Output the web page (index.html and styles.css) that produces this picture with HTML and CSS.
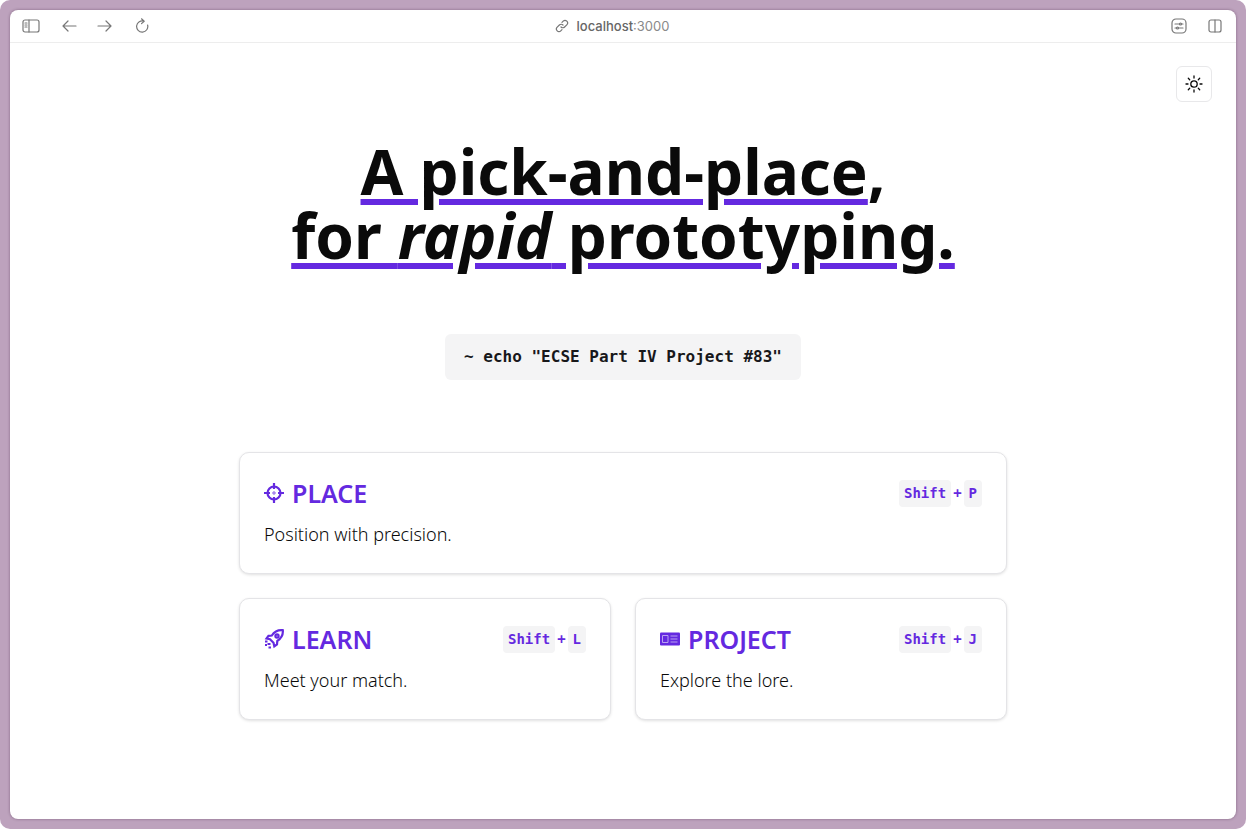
FILE: index.html
```html
<!DOCTYPE html>
<html lang="en">
<head>
    <meta charset="UTF-8">
    <meta name="viewport" content="width=device-width, initial-scale=1.0">
    <title>localhost:3000</title>
    <link rel="stylesheet" href="styles.css">
</head>
<body>
    <div class="frame">
        <div class="window">
            <div class="toolbar">
                <div class="toolbar-group">
                    <svg class="tool-icon" width="18" height="14" viewBox="0 0 18 14"><rect x="1" y="1" width="16" height="12" rx="2"/><path d="M7 1v12M3 4h2M3 6h2M3 8h2"/></svg>
                    <svg class="tool-icon" width="16" height="14" viewBox="0 0 16 14"><path d="M15 7H2M7 2 2 7l5 5"/></svg>
                    <svg class="tool-icon" width="16" height="14" viewBox="0 0 16 14"><path d="M1 7h13M9 2l5 5-5 5"/></svg>
                    <svg class="tool-icon" width="16" height="16" viewBox="0 0 16 16"><path d="M10 3.200A5.600 5.600 0 1 0 13.600 7M7.500 .8 10.200 3.200 7.500 5.600"/></svg>
                </div>
                <div class="address">
                    <svg class="tool-icon" width="14" height="14" viewBox="0 0 14 14"><path d="M6 8a2.500 2.500 0 0 0 3.600 0l2.200-2.200a2.500 2.500 0 0 0-3.600-3.600L7 3.400"/><path d="M8 6a2.500 2.500 0 0 0-3.600 0L2.200 8.200a2.500 2.500 0 0 0 3.600 3.600L7 10.600"/></svg>
                    <span class="host">localhost<span class="port">:3000</span></span>
                </div>
                <div class="toolbar-group right">
                    <svg class="tool-icon" width="16" height="16" viewBox="0 0 16 16"><rect x="1" y="1" width="14" height="14" rx="4"/><path d="M4 6h4.500M10.500 6H12M4 10h1.500M7.500 10H12"/><circle cx="9.500" cy="6" r="1"/><circle cx="6.500" cy="10" r="1"/></svg>
                    <svg class="tool-icon" width="14" height="14" viewBox="0 0 14 14"><rect x="1" y="1" width="12" height="12" rx="2"/><path d="M7 1v12"/></svg>
                </div>
            </div>

            <main class="page">
                <div class="top-bar">
                    <button class="theme-button" type="button" aria-label="Toggle theme">
                        <svg width="18" height="18" viewBox="0 0 18 18"><circle cx="9" cy="9" r="3.200"/><path d="M9 1v2M9 15v2M1 9h2M15 9h2M3.300 3.300l1.400 1.400M13.300 13.300l1.400 1.400M3.300 14.700l1.400-1.400M13.300 4.700l1.400-1.400"/></svg>
                    </button>
                </div>

                <h1 class="headline">A pick-and-place<span class="no-line">,</span><br>for <em>rapid</em> prototyping.</h1>

                <code class="echo">~ echo "ECSE Part IV Project #83"</code>

                <div class="cards">
                    <a class="card wide" href="#">
                        <div class="card-head">
                            <h2 class="card-title">
                                <svg class="card-icon" width="20" height="20" viewBox="0 0 20 20"><circle cx="10" cy="10" r="6.500"/><circle class="thin" cx="10" cy="10" r="1.200"/><path d="M10 0v6M10 14v6M0 10h6M14 10h6"/></svg>
                                PLACE
                            </h2>
                            <div class="keys"><kbd>Shift</kbd><span>+</span><kbd>P</kbd></div>
                        </div>
                        <p class="card-text">Position with precision.</p>
                    </a>
                    <a class="card" href="#">
                        <div class="card-head">
                            <h2 class="card-title">
                                <svg class="card-icon" width="20" height="20" viewBox="0 0 20 20"><path d="M18.800 1.200c-5-.5-8.500 1.500-11 5.300l-3.300.3-2 2.700 3.500.8 3.500 3.500.8 3.500 2.700-2 .3-3.300c3.800-2.500 6-6 5.500-10.800Z"/><circle cx="13" cy="7" r="1.600"/><path d="M1 12.500h2.500M3.500 15h3M1 16h2M4.500 18.500h2.500"/></svg>
                                LEARN
                            </h2>
                            <div class="keys"><kbd>Shift</kbd><span>+</span><kbd>L</kbd></div>
                        </div>
                        <p class="card-text">Meet your match.</p>
                    </a>
                    <a class="card" href="#">
                        <div class="card-head">
                            <h2 class="card-title">
                                <svg class="card-icon news" width="20" height="20" viewBox="0 0 20 20"><rect x="0" y="3.500" width="20" height="13" rx="1"/><path class="news-lines" d="M2.500 6.500h5.500v7H2.500ZM10.500 7H17.500M10.500 10H17.500M10.500 13H17.500"/></svg>
                                PROJECT
                            </h2>
                            <div class="keys"><kbd>Shift</kbd><span>+</span><kbd>J</kbd></div>
                        </div>
                        <p class="card-text">Explore the lore.</p>
                    </a>
                </div>
            </main>
        </div>
    </div>
</body>
</html>
```

FILE: styles.css
```css
* {
    box-sizing: border-box;
}
html, body {
    height: 100%;
}
body {
    margin: 0;
    background-color: #fff;
    font-family: "Noto Sans", sans-serif;
    color: #0a0a0a;
}
.frame {
    height: 100%;
    padding: 10px;
    background-color: #bda2bd;
    border-radius: 10px;
}
.window {
    height: 100%;
    display: flex;
    flex-direction: column;
    background-color: #fff;
    border-radius: 8px;
    box-shadow: 0 0 3px rgba(60, 30, 60, 0.45);
    overflow: hidden;
}

/* browser chrome */
.toolbar {
    height: 33px;
    flex-shrink: 0;
    display: grid;
    grid-template-columns: 1fr auto 1fr;
    align-items: center;
    padding: 0 14px 0 12px;
    border-bottom: 1px solid #ededed;
}
.toolbar-group {
    display: flex;
    align-items: center;
    gap: 20.5px;
}
.toolbar-group.right {
    justify-content: flex-end;
    gap: 21px;
}
.tool-icon {
    fill: none;
    stroke: #777;
    stroke-width: 1.2;
    stroke-linecap: round;
    stroke-linejoin: round;
}
.address {
    display: flex;
    align-items: center;
    gap: 8px;
    margin-right: 20px;
}
.host {
    font-family: Inter, sans-serif;
    font-size: 13px;
    font-weight: 500;
    color: #666;
}
.port {
    font-weight: 400;
    color: #8a8a8a;
}

/* page */
.page {
    flex: 1;
    display: flex;
    flex-direction: column;
    align-items: center;
}
.top-bar {
    align-self: stretch;
    display: flex;
    justify-content: flex-end;
    padding: 23px 24px 0;
}
.theme-button {
    width: 36px;
    height: 36px;
    padding: 0;
    display: flex;
    align-items: center;
    justify-content: center;
    background-color: #fff;
    border: 1px solid #e8e8ea;
    border-radius: 6px;
}
.theme-button svg {
    fill: none;
    stroke: #0a0a0a;
    stroke-width: 1.3;
    stroke-linecap: round;
}
.headline {
    margin: 37px 0 0;
    font-family: "Noto Sans", sans-serif;
    font-size: 62px;
    font-weight: 700;
    line-height: 64px;
    text-align: center;
    color: #0a0a0a;
    text-decoration-line: underline;
    text-decoration-color: #6429e0;
    text-decoration-thickness: 6px;
    text-underline-offset: 4px;
    text-decoration-skip-ink: auto;
}
.no-line {
    display: inline-block;
}
.echo {
    margin-top: 67px;
    padding: 12px 19px;
    height: 46px;
    background-color: #f4f4f5;
    border-radius: 6px;
    font-family: "DejaVu Sans Mono", monospace;
    font-size: 16px;
    font-weight: 700;
    line-height: 22px;
    color: #18181b;
}

/* cards */
.cards {
    width: 768px;
    margin-top: 72px;
    display: grid;
    grid-template-columns: 1fr 1fr;
    gap: 24px;
}
.card {
    height: 122px;
    padding: 24px;
    display: block;
    background-color: #fff;
    border: 1px solid #e4e4e7;
    border-radius: 10px;
    box-shadow: 0 1px 3px rgba(0, 0, 0, 0.12);
    text-decoration: none;
    color: #0a0a0a;
}
.card.wide {
    grid-column: span 2;
}
.card-head {
    display: flex;
    align-items: center;
    justify-content: space-between;
    height: 32px;
}
.card-title {
    margin: 0;
    display: flex;
    align-items: center;
    gap: 8px;
    font-family: "Noto Sans", sans-serif;
    font-size: 25px;
    font-weight: 600;
    line-height: 30px;
    color: #6429e0;
}
.card-icon {
    fill: none;
    stroke: #6429e0;
    stroke-width: 2.2;
}
.card-icon .thin {
    stroke-width: 0.8;
}
.card-icon.news {
    fill: #6429e0;
    stroke: none;
}
.news-lines {
    fill: none;
    stroke: #b9a2f0;
    stroke-width: 1;
}
.keys {
    display: flex;
    align-items: center;
    gap: 2px;
    font-family: "DejaVu Sans Mono", monospace;
    font-size: 14px;
    font-weight: 700;
    color: #6429e0;
}
kbd {
    padding: 3px 5px;
    height: 27px;
    line-height: 21px;
    font-family: inherit;
    background-color: #f4f4f5;
    border-radius: 4px;
}
.card-text {
    margin: 11px 0 0;
    font-size: 18px;
    line-height: 28px;
    font-weight: 350;
    color: #0a0a0a;
}
```
